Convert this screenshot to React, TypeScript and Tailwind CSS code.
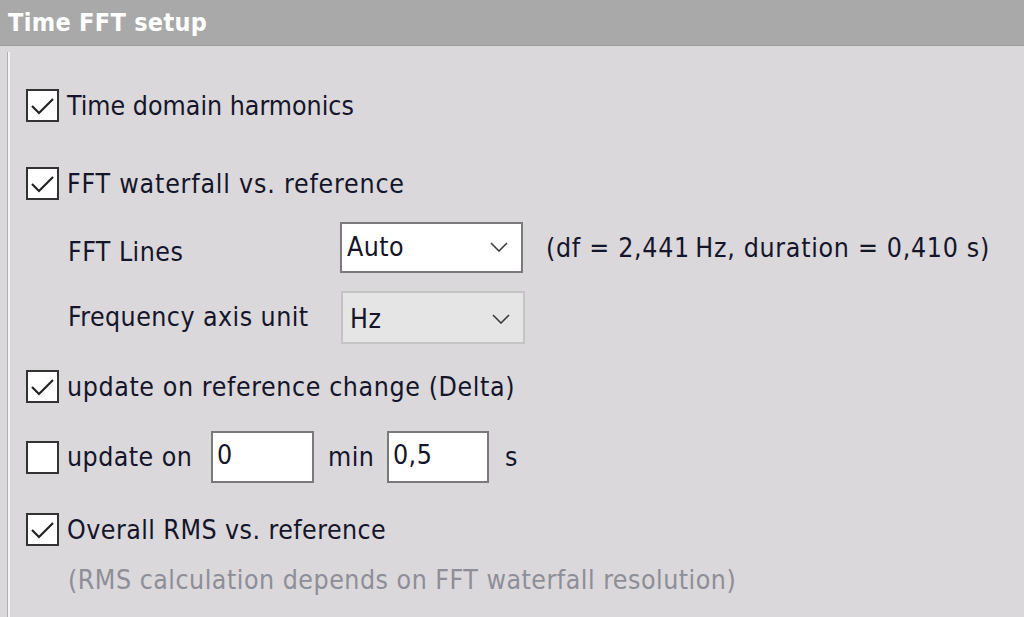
import React from "react";

const font = { fontFamily: '"DejaVu Sans Condensed", "DejaVu Sans", sans-serif' };

function Check({ checked }: { checked: boolean }) {
  return (
    <div className="w-[33px] h-[33px] shrink-0 border-2 border-[#333333] bg-white flex items-center justify-center">
      {checked && (
        <svg width="25" height="20" viewBox="0 0 25 20" fill="none">
          <path d="M2 10 L9 17 L23 3" stroke="#222" strokeWidth="2.2" strokeLinejoin="miter" />
        </svg>
      )}
    </div>
  );
}

function Chevron() {
  return (
    <svg width="18" height="10" viewBox="0 0 18 10" fill="none">
      <path d="M1 1 L9 9 L17 1" stroke="#3a3a3a" strokeWidth="1.6" />
    </svg>
  );
}

export default function App() {
  return (
    <div className="w-[1024px] h-[617px] overflow-hidden bg-[#dad8db] text-[#15152a] text-[26.5px] tracking-[0.45px] flex flex-col" style={font}>
      <div className="h-[46px] shrink-0 bg-[#a9a9a9] flex items-center pl-[8px] border-b border-[#9c9c9c]">
        <span className="text-white font-bold text-[25px] tracking-[0.3px]">Time FFT setup</span>
      </div>
      <div className="flex flex-1 pt-[6px]">
        <div className="ml-[7px] w-[3px] shrink-0 border-l-[1px] border-[#b0b0b0] bg-[#f4f4f4]" />
        <div className="flex flex-col pl-[16px] pt-[37px]">
          <div className="h-[33px] flex items-center gap-[8px]">
            <Check checked />
            <span className="tracking-[0px]">Time domain harmonics</span>
          </div>
          <div className="h-[33px] mt-[45px] flex items-center gap-[8px]">
            <Check checked />
            <span className="tracking-[0.8px]">FFT waterfall vs. reference</span>
          </div>
          <div className="h-[51px] mt-[22px] flex items-center">
            <span className="ml-[42px] w-[272px] shrink-0 pt-[8px]">FFT Lines</span>
            <div className="w-[183px] h-[51px] shrink-0 border-2 border-[#7a7a7a] bg-white flex items-center justify-between pl-[5px] pr-[13px] pb-[2px]">
              <span>Auto</span>
              <Chevron />
            </div>
            <span className="ml-[23px] whitespace-nowrap tracking-[0.7px]">(df = 2,441&#8201;Hz, duration = 0,410 s)</span>
          </div>
          <div className="h-[53px] mt-[18px] flex items-center">
            <span className="ml-[42px] w-[273px] shrink-0 pb-[2px]">Frequency axis unit</span>
            <div className="w-[184px] h-[53px] shrink-0 border-2 border-[#c4c4c4] bg-[#e5e5e5] flex items-center justify-between pl-[7px] pr-[13px] pt-[2px]">
              <span>Hz</span>
              <Chevron />
            </div>
          </div>
          <div className="h-[33px] mt-[26px] flex items-center gap-[8px]">
            <Check checked />
            <span className="tracking-[0.6px]">update on reference change (Delta)</span>
          </div>
          <div className="h-[52px] mt-[28px] flex items-center">
            <Check checked={false} />
            <span className="ml-[8px] w-[144px] shrink-0">update on</span>
            <div className="w-[103px] h-[52px] shrink-0 border-2 border-[#7a7a7a] bg-white flex items-center pl-[4px] pb-[4px]">0</div>
            <span className="w-[73px] shrink-0 pl-[14px]">min</span>
            <div className="w-[102px] h-[52px] shrink-0 border-2 border-[#7a7a7a] bg-white flex items-center pl-[4px] pb-[4px]">0,5</div>
            <span className="ml-[16px]">s</span>
          </div>
          <div className="h-[33px] mt-[30px] flex items-center gap-[8px]">
            <Check checked />
            <span>Overall RMS vs. reference</span>
          </div>
          <div className="h-[30px] mt-[19px] flex items-center ml-[42px] whitespace-nowrap text-[#8e8e96] tracking-[0.5px]">
            (RMS calculation depends on FFT waterfall resolution)
          </div>
        </div>
      </div>
    </div>
  );
}
